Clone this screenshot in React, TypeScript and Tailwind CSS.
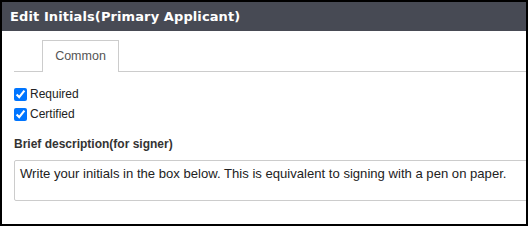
import { useState } from 'react';

const App = () => {
  const [required, setRequired] = useState(true);
  const [certified, setCertified] = useState(true);

  return (
    <div className="w-[528px] h-[226px] border-2 border-black bg-white overflow-hidden flex flex-col">
      <div className="h-[29px] bg-[#474a54] flex items-center pl-2 shrink-0">
        <span className="text-white font-bold text-[13px] font-['DejaVu_Sans',Verdana,sans-serif] tracking-[0.1px]">
          Edit Initials(Primary Applicant)
        </span>
      </div>

      <div className="pl-3 font-['Liberation_Sans',Arial,sans-serif]">
        <div className="mt-[9px] flex border-b border-[#cccccc]">
          <div className="ml-[28px] w-[77px] h-[32px] border border-b-0 border-[#cccccc] bg-white -mb-px flex items-center justify-center text-[12.5px] text-[#555555]">
            Common
          </div>
        </div>

        <div className="mt-[15px] flex flex-col gap-[6px]">
          <label className="flex items-center h-[14px] text-[12px] text-[#222222]">
            <input
              type="checkbox"
              checked={required}
              onChange={(e) => setRequired(e.target.checked)}
              className="m-0 mr-[3px] w-[13px] h-[13px]"
            />
            Required
          </label>
          <label className="flex items-center h-[14px] text-[12px] text-[#222222]">
            <input
              type="checkbox"
              checked={certified}
              onChange={(e) => setCertified(e.target.checked)}
              className="m-0 mr-[3px] w-[13px] h-[13px]"
            />
            Certified
          </label>
        </div>

        <div className="mt-[14px] text-[12px] font-bold text-[#333333]">
          Brief description(for signer)
        </div>

        <div className="mt-[7px] w-[540px] h-[41px] border border-[#cccccc] rounded-[2px] px-[5px] pt-[3px] text-[13.1px] text-[#222222]">
          Write your initials in the box below. This is equivalent to signing with a pen on paper.
        </div>
      </div>
    </div>
  );
};

export default App;
